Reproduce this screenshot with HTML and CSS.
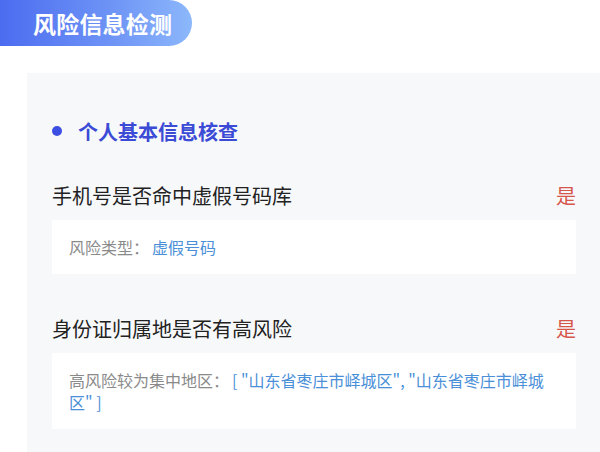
FILE: index.html
```html
<!DOCTYPE html>
<html lang="zh-CN">
<head>
<meta charset="utf-8">
<link rel="stylesheet" href="styles.css">
</head>
<body>
<div class="page">
  <div class="badge">风险信息检测</div>
  <div class="panel">
    <div class="section-title"><span class="dot"></span>个人基本信息核查</div>
    <div class="item">
      <div class="item-head"><span class="label">手机号是否命中虚假号码库</span><span class="flag">是</span></div>
      <div class="detail">风险类型<span class="colon">：</span><span class="val">虚假号码</span></div>
    </div>
    <div class="item">
      <div class="item-head"><span class="label">身份证归属地是否有高风险</span><span class="flag">是</span></div>
      <div class="detail">高风险较为集中地区<span class="colon">：</span><span class="val">[ "山东省枣庄市峄城区", "山东省枣庄市峄城区" ]</span></div>
    </div>
  </div>
</div>
</body>
</html>
```
FILE: styles.css
```css
html, body {
  margin: 0;
  padding: 0;
  background: #ffffff;
  font-family: "Noto Sans CJK SC", "Noto Sans", sans-serif;
}
.page {
  display: flex;
  flex-direction: column;
  gap: 27px;
}
.badge {
  align-self: flex-start;
  width: 159px;
  height: 46px;
  padding-left: 33px;
  box-sizing: content-box;
  background: linear-gradient(90deg, #4c6cf0 0%, #6f95f6 60%, #8cb8fb 100%);
  border-radius: 0 23px 23px 0;
  color: #ffffff;
  font-size: 23px;
  font-weight: 700;
  line-height: 46px;
  letter-spacing: 0.2px;
}
.panel {
  margin-left: 27px;
  background: #f7f8fa;
  padding: 44px 24px 30px 25px;
  display: flex;
  flex-direction: column;
  gap: 40px;
}
.section-title {
  display: flex;
  align-items: center;
  height: 28px;
  font-size: 20px;
  font-weight: 700;
  color: #3b4bd6;
  margin-bottom: -4px;
}
.dot {
  width: 10px;
  height: 10px;
  border-radius: 50%;
  background: #3d4fe2;
  margin: 0 16px 0 0;
}
.item {
  display: flex;
  flex-direction: column;
  gap: 11px;
}
.item-head {
  display: flex;
  justify-content: space-between;
  align-items: center;
  height: 28px;
}
.label {
  font-size: 20px;
  color: #222222;
}
.flag {
  font-size: 20px;
  color: #d6564c;
}
.detail {
  background: #ffffff;
  padding: 16px 17px;
  font-size: 16px;
  line-height: 22px;
  color: #8a8a8a;
  text-spacing-trim: space-all;
}
.colon {
  font-family: "Noto Sans CJK TC", "Noto Sans CJK SC", sans-serif;
  margin-right: 3px;
}
.val {
  color: #4a8fd8;
}
```
